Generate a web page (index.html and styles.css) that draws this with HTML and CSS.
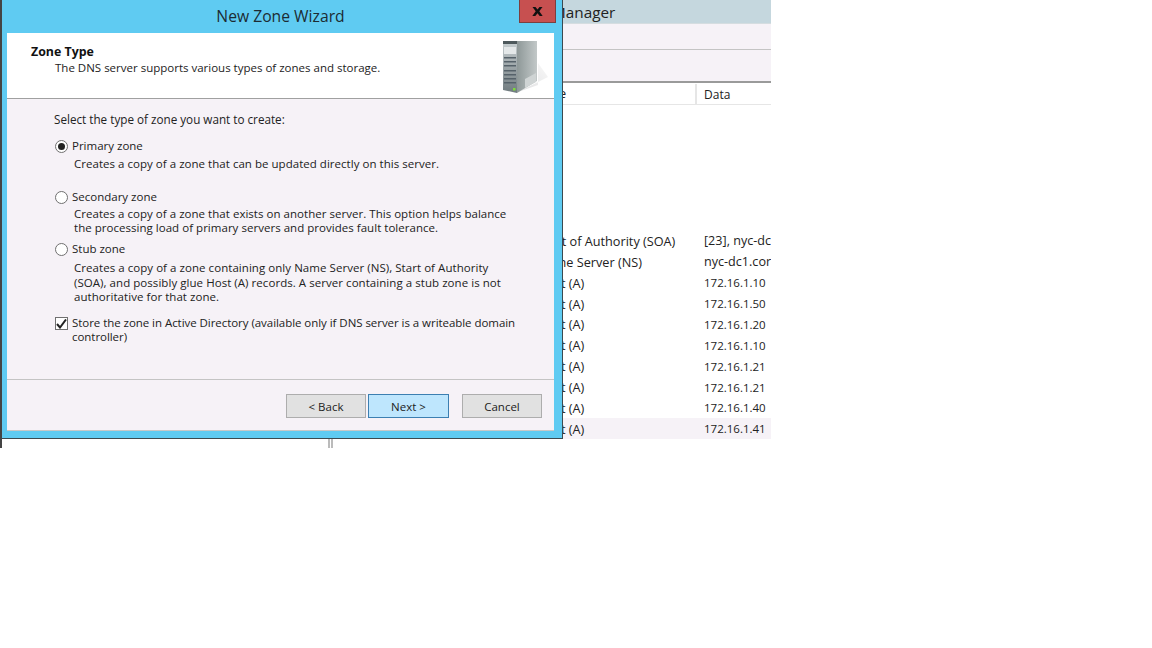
FILE: index.html
```html
<!DOCTYPE html>
<html lang="en">
<head>
    <meta charset="utf-8">
    <title>New Zone Wizard</title>
    <link rel="stylesheet" href="styles.css">
</head>
<body>
    <div class="desktop">
        <section class="manager">
            <div class="manager-title">Manager</div>
            <div class="manager-menu"></div>
            <div class="manager-tools"></div>
            <div class="row head">
                <span class="cell-type">Type</span>
                <span class="cell-data">Data</span>
            </div>
            <div class="rows">
                <div class="row"><span class="cell-type">Start of Authority (SOA)</span><span class="cell-data long">[23], nyc-dc1.corp.local.</span></div>
                <div class="row"><span class="cell-type">Name Server (NS)</span><span class="cell-data long">nyc-dc1.corp.local.</span></div>
                <div class="row"><span class="cell-type">Host (A)</span><span class="cell-data">172.16.1.10</span></div>
                <div class="row"><span class="cell-type">Host (A)</span><span class="cell-data">172.16.1.50</span></div>
                <div class="row"><span class="cell-type">Host (A)</span><span class="cell-data">172.16.1.20</span></div>
                <div class="row"><span class="cell-type">Host (A)</span><span class="cell-data">172.16.1.10</span></div>
                <div class="row"><span class="cell-type">Host (A)</span><span class="cell-data">172.16.1.21</span></div>
                <div class="row"><span class="cell-type">Host (A)</span><span class="cell-data">172.16.1.21</span></div>
                <div class="row"><span class="cell-type">Host (A)</span><span class="cell-data">172.16.1.40</span></div>
                <div class="row selected"><span class="cell-type">Host (A)</span><span class="cell-data">172.16.1.41</span></div>
            </div>
        </section>
        <i class="stub-left"></i>
        <i class="stub-split"></i>

        <section class="wizard">
            <div class="wizard-title">New Zone Wizard</div>
            <button class="close" aria-label="Close">
                <svg width="11" height="9" viewBox="0 0 11 10" preserveAspectRatio="none"><path d="M0.500 0h3l2 2.800 2-2.800h3l-3.200 4.800 3.400 5.200h-3l-2.200-3.100-2.200 3.100h-3l3.400-5.200z" fill="#111"/></svg>
            </button>
            <div class="wizard-client">
                <header class="wizard-head">
                    <div>
                        <h1>Zone Type</h1>
                        <p>The DNS server supports various types of zones and storage.</p>
                    </div>
                    <svg class="server" width="48" height="56" viewBox="0 0 48 56">
                        <defs>
                            <linearGradient id="side" x1="0" x2="1" y1="0" y2="0">
                                <stop offset="0" stop-color="#8e9898"/>
                                <stop offset="1" stop-color="#c2c8c8"/>
                            </linearGradient>
                            <linearGradient id="front" x1="0" x2="0" y1="0" y2="1">
                                <stop offset="0" stop-color="#c9d0d2"/>
                                <stop offset="1" stop-color="#6f7a7e"/>
                            </linearGradient>
                            <linearGradient id="shadow" x1="0" x2="1" y1="1" y2="0">
                                <stop offset="0" stop-color="#dedfe0"/>
                                <stop offset="1" stop-color="#f9f9f9"/>
                            </linearGradient>
                        </defs>
                        <path d="M17 53l30-15-10-14v22z" fill="url(#shadow)"/>
                        <path d="M16 2h20v40l-20 12z" fill="url(#side)"/>
                        <path d="M24 40l11-6v9l-11 6z" fill="#cfd4d4"/>
                        <path d="M2 2h14v52l-14-3z" fill="url(#front)"/>
                        <path d="M2 2h14v3h-14z" fill="#4d595c"/>
                        <path d="M3 8h12v7h-12z" fill="#e4e8e9"/>
                        <path d="M3 18h12v1.500h-12zM3 22h12v1.500h-12zM3 26h12v1.500h-12zM3 31h12v1.500h-12zM3 35h12v1.500h-12zM3 39h12v1.500h-12zM3 43h12v1.500h-12z" fill="#56626a"/>
                        <path d="M12 49h2.500v2.500h-2.500z" fill="#7ddc3a"/>
                    </svg>
                </header>
                <main class="wizard-body">
                    <p class="prompt">Select the type of zone you want to create:</p>
                    <div class="option first">
                        <label class="choice"><i class="radio on"></i>Primary zone</label>
                        <p class="desc">Creates a copy of a zone that can be updated directly on this server.</p>
                    </div>
                    <div class="option second">
                        <label class="choice"><i class="radio"></i>Secondary zone</label>
                        <p class="desc">Creates a copy of a zone that exists on another server. This option helps balance<br>the processing load of primary servers and provides fault tolerance.</p>
                    </div>
                    <div class="option third">
                        <label class="choice"><i class="radio"></i>Stub zone</label>
                        <p class="desc">Creates a copy of a zone containing only Name Server (NS), Start of Authority<br>(SOA), and possibly glue Host (A) records. A server containing a stub zone is not<br>authoritative for that zone.</p>
                    </div>
                    <label class="store">
                        <i class="check">
                            <svg width="11" height="10" viewBox="0 0 11 10"><path d="M1 5l3 3.500 6-8" fill="none" stroke="#222" stroke-width="2"/></svg>
                        </i>
                        <span>Store the zone in Active Directory (available only if DNS server is a writeable domain<br>controller)</span>
                    </label>
                </main>
                <footer class="wizard-foot">
                    <button class="btn">&lt; Back</button>
                    <button class="btn next">Next &gt;</button>
                    <button class="btn cancel">Cancel</button>
                </footer>
            </div>
        </section>
    </div>
</body>
</html>
```

FILE: styles.css
```css
* {
    box-sizing: border-box;
}

body {
    margin: 0;
    background: #fff;
    font-family: "Open Sans", "Noto Sans", sans-serif;
    font-size: 11.5px;
    color: #222;
}

p,
h1 {
    margin: 0;
}

.desktop {
    position: relative;
    width: 771px;
    height: 448px;
    overflow: hidden;
}

/* window behind the wizard */
.manager {
    height: 100%;
}

.manager-title {
    height: 24px;
    padding-left: 552px;
    background: #c5d7de;
    font-size: 15.3px;
    line-height: 24px;
    border-bottom: 1px solid #d5dde0;
}

.manager-menu {
    height: 26px;
    background: #f6f2f7;
    border-bottom: 1px solid #c4c4c4;
}

.manager-tools {
    height: 33px;
    background: #f6f2f7;
    border-bottom: 2px solid #9a9a9a;
}

.row {
    display: flex;
    height: 20.9px;
    align-items: center;
    white-space: nowrap;
    overflow: hidden;
}

.row.head {
    height: 22px;
    padding-top: 1px;
    border-bottom: 1px solid #e6e6e6;
}

.rows {
    margin-top: 125.4px;
}

.row.selected {
    background: #f6f2f7;
}

.cell-type {
    width: 704px;
    padding-left: 538px;
    font-size: 12.7px;
    flex: none;
}

.cell-data.long {
    font-size: 12.6px;
}

.head .cell-type {
    width: 697px;
    height: 100%;
    line-height: 19px;
    border-right: 2px solid #e6e6e6;
}

.head .cell-data {
    padding-left: 7px;
    font-size: 12px;
}

.stub-left {
    position: absolute;
    left: 0;
    top: 430px;
    width: 2px;
    height: 18px;
    background: #444;
}

.stub-split {
    position: absolute;
    left: 328px;
    top: 430px;
    width: 5px;
    height: 18px;
    border-left: 2px solid #bbb;
    border-right: 2px solid #bbb;
}

/* wizard dialog */
.wizard {
    position: absolute;
    left: 0;
    top: 0;
    width: 563px;
    height: 439px;
    display: flex;
    flex-direction: column;
    padding: 0 8px 7px 5px;
    background: #5fcbf2;
    border-left: 2px solid #444;
    border-right: 1px solid #3c4a50;
    border-bottom: 1px solid #3c4a50;
}

.wizard-title {
    height: 33px;
    font-size: 15.7px;
    line-height: 33px;
    text-align: center;
    color: #1c2b33;
    flex: none;
}

.close {
    position: absolute;
    right: 6px;
    top: -1px;
    width: 37px;
    height: 24px;
    padding: 0;
    display: flex;
    align-items: center;
    justify-content: center;
    background: #c75050;
    border: 1px solid #7b3f3f;
}

.wizard-client {
    flex: 1;
    display: flex;
    flex-direction: column;
    background: #f6f2f7;
    border-bottom: 1px solid #c8c8c8;
}

.wizard-head {
    height: 66px;
    display: flex;
    justify-content: space-between;
    padding: 11px 5px 0 24px;
    background: #fff;
    border-bottom: 1px solid #a0a0a0;
}

.wizard-head h1 {
    font-size: 12.4px;
    font-weight: 700;
    line-height: 16px;
    color: #111;
}

.wizard-head p {
    padding-left: 24px;
    line-height: 16px;
}

.server {
    margin-top: -5px;
}

.wizard-body {
    flex: 1;
    padding: 13px 0 0 47px;
    line-height: 14px;
}

.prompt {
    font-size: 11.7px;
}

.option.first {
    margin-top: 12px;
}

.option.second {
    margin-top: 18px;
}

.option.third {
    margin-top: 6px;
}

.choice {
    display: flex;
    align-items: center;
    height: 16px;
}

.desc {
    padding: 2px 0 0 20px;
    letter-spacing: 0.03px;
}

.first .desc {
    padding-top: 3px;
}

.third .desc {
    padding-top: 4px;
    line-height: 14.5px;
    letter-spacing: 0.05px;
}

.radio {
    width: 13px;
    height: 13px;
    margin: 0 4px 0 1px;
    border: 1px solid #707070;
    border-radius: 50%;
    background: #fff;
    display: flex;
    align-items: center;
    justify-content: center;
}

.radio.on::after {
    content: "";
    width: 7px;
    height: 7px;
    border-radius: 50%;
    background: #222;
}

.store {
    display: flex;
    margin-top: 11.5px;
    letter-spacing: -0.05px;
}

.check {
    width: 13px;
    height: 13px;
    margin: 1px 4px 0 1px;
    display: flex;
    align-items: center;
    justify-content: center;
    background: #fff;
    border: 1px solid #707070;
}

.wizard-foot {
    height: 51px;
    display: flex;
    justify-content: flex-end;
    gap: 2px;
    padding: 14px 12px 0 0;
    border-top: 1px solid #c4c4c4;
}

.btn {
    width: 80px;
    height: 24px;
    padding: 0;
    background: #e1e1e1;
    border: 1px solid #adadad;
    font: inherit;
    color: #222;
}

.btn.next {
    width: 81px;
    background: #bee6fd;
    border-color: #3c7fb1;
}

.btn.cancel {
    margin-left: 11px;
}
```
